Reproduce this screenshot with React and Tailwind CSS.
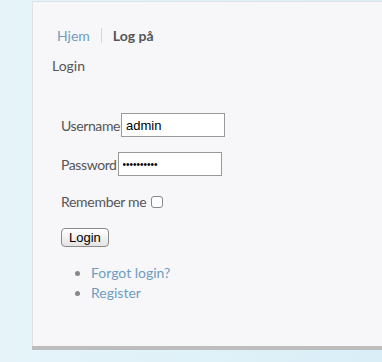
import React from 'react';

function App() {
  return (
    <div className="w-[382px] h-[362px] overflow-hidden bg-gradient-to-r from-[#e6f4fa] to-[#d9eef7] font-['Lato',sans-serif]">
      <div className="ml-[32px] mt-[1px] h-[345px] bg-[#f7f7f9] border-t border-l border-[#dfe3e6] shadow-[0_4px_0_#bdbdbd] text-[14px] text-[#555]">
        <div className="pt-[21px] pl-[24px] flex items-center h-[46px]">
          <a className="text-[#6f9dc0]">Hjem</a>
          <span className="mx-[11px] w-px h-[15px] bg-[#d6d6d6]" />
          <span className="font-bold text-[#555]">Log på</span>
        </div>
        <div className="pl-[19px] mt-[8px] leading-[20px]">Login</div>

        <form className="pl-[28px] mt-[37px] font-['Liberation_Sans',sans-serif]">
          <div className="flex items-center h-[24px]">
            <label className="text-[#555] font-['Lato',sans-serif] tracking-[-0.4px]">Username</label>
            <input
              readOnly
              value="admin"
              className="ml-px w-[104px] h-[24px] border border-[#9a9a9a] bg-white px-[4px] text-[13px] text-black outline-none"
            />
          </div>
          <div className="flex items-center h-[24px] mt-[15px]">
            <label className="text-[#555] font-['Lato',sans-serif] tracking-[-0.4px]">Password</label>
            <input
              readOnly
              type="password"
              value="1234567890"
              className="ml-px w-[104px] h-[24px] border border-[#9a9a9a] bg-white px-[4px] text-[10px] text-black outline-none"
            />
          </div>
          <div className="flex items-center h-[20px] mt-[15px]">
            <label className="text-[#555] font-['Lato',sans-serif] tracking-[-0.3px]">Remember me</label>
            <span className="ml-[5px] mt-[2px] w-[12px] h-[12px] rounded-[3px] border border-[#888] bg-white" />
          </div>
          <button
            type="button"
            className="mt-[17px] h-[19px] px-[7px] rounded-[4px] border border-[#8a8a8a] bg-gradient-to-b from-white to-[#e4e4e4] text-[13px] leading-none text-black"
          >
            Login
          </button>
        </form>

        <ul className="pl-[58px] mt-[15px] list-disc marker:text-[#888] text-[#6f9dc0] leading-[20px]">
          <li>Forgot login?</li>
          <li>Register</li>
        </ul>
      </div>
    </div>
  );
}

export default App;
